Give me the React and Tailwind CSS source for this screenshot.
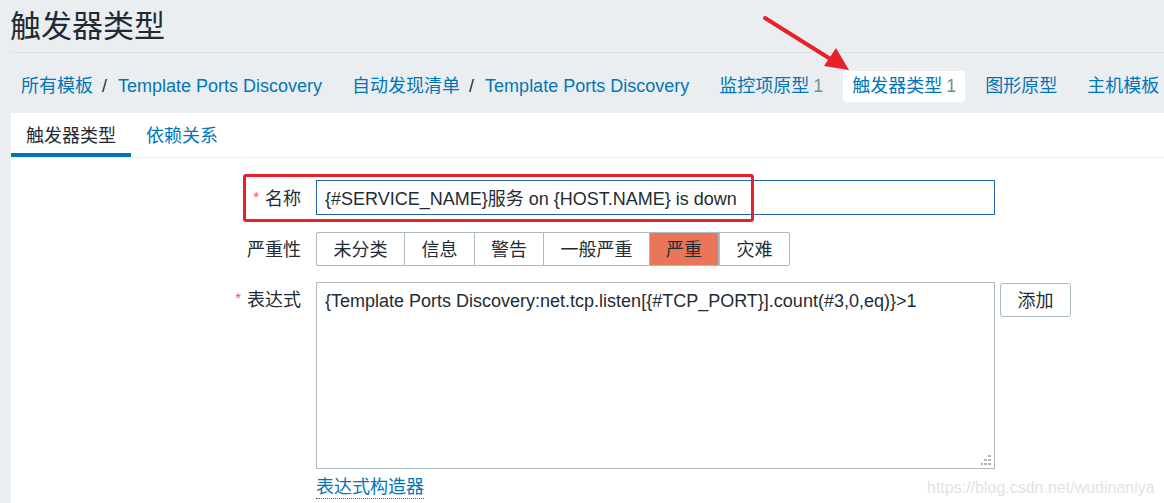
const FONT = { fontFamily: '"Liberation Sans", Arial, "Noto Sans CJK SC", sans-serif' };

const severities = ["未分类", "信息", "警告", "一般严重", "严重", "灾难"];
const sevWidths = ["w-[87px]", "w-[70px]", "w-[69px]", "w-[106px]", "w-[70px]", "w-[70px]"];

function Crumb({ children, active }) {
  if (active) {
    return (
      <div className="mx-[5px] px-[9px] h-[31px] flex items-center bg-white rounded-[3px] text-[#0275b8]">
        {children}
      </div>
    );
  }
  return <div className="mx-[15px] flex items-center text-[#0275b8]">{children}</div>;
}

function Sep() {
  return <span className="ml-[9px] mr-[11px] text-[#1f2c33]">/</span>;
}

export default function App() {
  return (
    <div className="relative w-[1164px] h-[503px] overflow-hidden bg-[#ebeef1] text-[#1f2c33]" style={FONT}>
      {/* header */}
      <div className="ml-[10px] h-[53px] border-b border-[#dce2e5] flex items-center">
        <h1 className="text-[31px] leading-none">触发器类型</h1>
      </div>

      {/* breadcrumbs / nav */}
      <div className="h-[60px] flex items-center pl-[6px] pt-[7px] text-[18px] whitespace-nowrap">
        <Crumb>
          所有模板<Sep />Template Ports Discovery
        </Crumb>
        <Crumb>
          自动发现清单<Sep />Template Ports Discovery
        </Crumb>
        <Crumb>
          监控项原型<span className="ml-[4px] text-[#768d99]">1</span>
        </Crumb>
        <Crumb active>
          触发器类型<span className="ml-[4px] text-[#768d99]">1</span>
        </Crumb>
        <Crumb>图形原型</Crumb>
        <Crumb>主机模板</Crumb>
      </div>

      {/* panel */}
      <div className="ml-[11px] bg-white h-[400px]">
        <div className="flex h-[45px] border-b border-[#ebeef1] text-[18px]">
          <div className="px-[15px] flex items-center border-b-4 border-[#0275b8] pt-[6px] text-[#1f2c33]">
            触发器类型
          </div>
          <div className="px-[15px] flex items-center pt-[2px] text-[#0275b8]">依赖关系</div>
        </div>

        <div className="pt-[22px] text-[18px]">
          {/* name */}
          <div className="flex">
            <div className="w-[290px] h-[35px] flex items-center justify-end pt-[3px]">
              <span className="text-[#e45959] text-[15px] mr-[6px] -mt-[4px]">*</span>名称
            </div>
            <div className="ml-[15px] w-[679px] h-[35px] border border-[#1f65a6] flex items-center pl-[8px] pt-[3px]">
              {"{#SERVICE_NAME}服务 on {HOST.NAME} is down"}
            </div>
          </div>

          {/* severity */}
          <div className="flex mt-[17px]">
            <div className="w-[290px] h-[34px] flex items-center justify-end pt-[3px]">严重性</div>
            <div className="ml-[15px] flex h-[34px] border border-[#acbbc2] rounded-[2px] overflow-hidden">
              {severities.map((s, i) => (
                <div
                  key={s}
                  className={
                    "flex items-center justify-center pt-[3px] " +
                    sevWidths[i] +
                    (i > 0 ? " border-l border-[#acbbc2]" : "") +
                    (i === 4 ? " bg-[#e97659] border-r border-[#7f8f99]" : "")
                  }
                >
                  {s}
                </div>
              ))}
            </div>
          </div>

          {/* expression */}
          <div className="flex mt-[16px]">
            <div className="w-[290px] h-[34px] flex items-center justify-end pt-[3px]">
              <span className="text-[#e45959] text-[15px] mr-[6px] -mt-[4px]">*</span>表达式
            </div>
            <div className="ml-[15px] flex flex-col">
              <div className="relative w-[679px] h-[187px] border border-[#acbbc2] pl-[8px] pt-[5px] leading-[26px]">
                {"{Template Ports Discovery:net.tcp.listen[{#TCP_PORT}].count(#3,0,eq)}>1"}
                <svg className="absolute right-[3px] bottom-[3px]" width="10" height="10" viewBox="0 0 10 10">
                  <rect x="7" y="0" width="3" height="2" fill="#b5b5b5" />
                  <rect x="3" y="4" width="3" height="2" fill="#b5b5b5" />
                  <rect x="7" y="4" width="3" height="2" fill="#b5b5b5" />
                  <rect x="0" y="8" width="2" height="2" fill="#b5b5b5" />
                  <rect x="3" y="8" width="3" height="2" fill="#b5b5b5" />
                  <rect x="7" y="8" width="3" height="2" fill="#b5b5b5" />
                </svg>
              </div>
              <div className="mt-[5px]">
                <span className="text-[#0275b8] border-b border-dotted border-[#0275b8] leading-[21px] inline-block">
                  表达式构造器
                </span>
              </div>
            </div>
            <div className="ml-[5px] mt-[1px] w-[71px] h-[34px] border border-[#acbbc2] rounded-[3px] flex items-center justify-center pt-[3px] self-start">
              添加
            </div>
          </div>
        </div>
      </div>

      {/* annotation: red box */}
      <div className="absolute left-[243px] top-[174px] w-[511px] h-[48px] border-[3px] border-[#e8202a] rounded-[3px]" />

      {/* annotation: red arrow */}
      <svg className="absolute left-0 top-0" width="1164" height="503" viewBox="0 0 1164 503">
        <line x1="765" y1="18" x2="832" y2="60" stroke="#e8202a" strokeWidth="4" strokeLinecap="round" />
        <polygon points="849,70 824,66 836,48" fill="#e8202a" />
      </svg>

      {/* watermark */}
      <div className="absolute left-[927px] top-[476px] text-[16px] text-[#e3e3e3] whitespace-nowrap">
        https://blog.csdn.net/wudinaniya
      </div>
    </div>
  );
}
